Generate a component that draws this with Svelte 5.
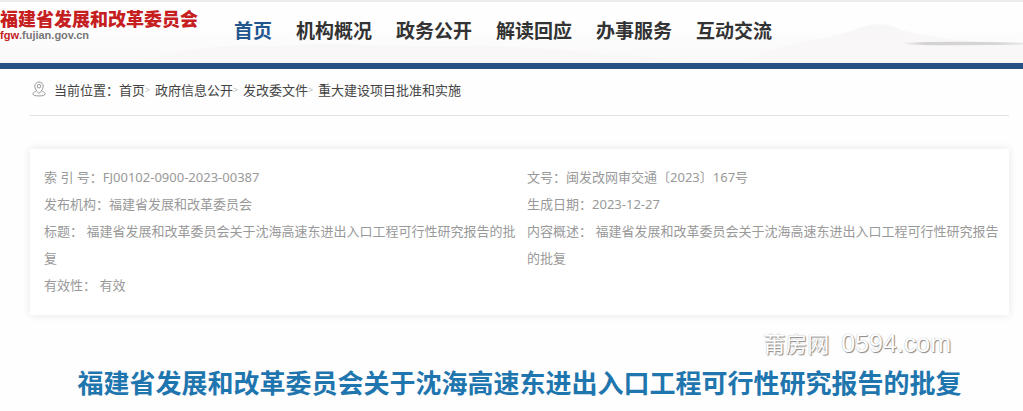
<script lang="ts">
  const title = "福建省发展和改革委员会关于沈海高速东进出入口工程可行性研究报告的批复";

  const nav = ["首页", "机构概况", "政务公开", "解读回应", "办事服务", "互动交流"];

  const crumbs = ["首页", "政府信息公开", "发改委文件", "重大建设项目批准和实施"];

  const columns = [
    [
      { label: "索 引 号：", value: "FJ00102-0900-2023-00387" },
      { label: "发布机构：", value: "福建省发展和改革委员会" },
      { label: "标题： ", value: title },
      { label: "有效性： ", value: "有效" },
    ],
    [
      { label: "文号：", value: "闽发改网审交通〔2023〕167号" },
      { label: "生成日期：", value: "2023-12-27" },
      { label: "内容概述： ", value: title },
    ],
  ];
</script>

<div class="page">
  <header>
    <svg class="hills" viewBox="0 0 1023 60" preserveAspectRatio="none" aria-hidden="true">
      <defs>
        <linearGradient id="fade" x1="0" y1="0" x2="0" y2="1">
          <stop offset="0" stop-color="#f5f3f4" />
          <stop offset="1" stop-color="#faf7f7" />
        </linearGradient>
        <linearGradient id="streak" x1="0" y1="0" x2="1" y2="0">
          <stop offset="0" stop-color="#d2d2d2" stop-opacity="0" />
          <stop offset="0.2" stop-color="#d2d2d2" />
          <stop offset="0.8" stop-color="#d6d6d6" />
          <stop offset="1" stop-color="#d2d2d2" stop-opacity="0.4" />
        </linearGradient>
      </defs>
      <path d="M130 60C180 48 220 40 270 44C340 38 420 46 480 43C540 44 600 52 660 54L700 60Z" fill="url(#fade)" opacity="0.6" />
      <path d="M740 60C790 36 830 38 860 25Q884 18 900 27C930 36 980 40 1023 42V60Z" fill="url(#fade)" opacity="0.7" />
      <path d="M900 40Q960 38 1023 40V42Q960 43 910 42Z" fill="url(#streak)" />
    </svg>
    <a class="logo" href="/">
      <strong>福建省发展和改革委员会</strong>
      <span><b>fgw</b>.fujian.gov.cn</span>
    </a>
    <nav>
      {#each nav as item, i (item)}
        <a href="#nav-{i}" class:active={i === 0}>{item}</a>
      {/each}
    </nav>
  </header>

  <main>
    <div class="crumbs">
      <svg class="pin" viewBox="0 0 14 16" aria-hidden="true">
        <path d="M7 12.5C4.2 9.8 2.8 7.6 2.8 5.2a4.2 4.2 0 0 1 8.4 0C11.2 7.6 9.8 9.8 7 12.5Z" />
        <circle cx="7" cy="5.2" r="1.8" />
        <path d="M3.8 10.4C1.8 11 .8 12 .8 13C.8 15.6 13.2 15.6 13.2 13C13.2 12 12.2 11 10.2 10.4" />
      </svg>
      <span>当前位置：</span>
      {#each crumbs as crumb, i (crumb)}
        {#if i > 0}<i>&gt;</i>{/if}
        <a href="#crumb-{i}">{crumb}</a>
      {/each}
    </div>

    <section class="card">
      {#each columns as column}
        <dl>
          {#each column as row (row.label)}
            <div><dt>{row.label}</dt><dd>{row.value}</dd></div>
          {/each}
        </dl>
      {/each}
    </section>

    <p class="mark">莆房网<span>0594.com</span></p>
    <h1>{title}</h1>
  </main>
</div>

<style>
  :global(body) {
    margin: 0;
    background: #fefefe;
  }

  .page {
    font-family: "Noto Sans", "Noto Sans CJK SC", sans-serif;
    font-size: 13px;
    color: #444;
    overflow: hidden;
  }

  a {
    color: inherit;
    text-decoration: none;
  }

  header {
    position: relative;
    display: flex;
    align-items: flex-start;
    height: 61px;
    border-top: 2px solid #ececec;
    border-bottom: 6px solid #265183;
    background: linear-gradient(#fefefe 40%, #faf8f8);
  }

  .hills {
    position: absolute;
    inset: 0;
    width: 100%;
    height: 100%;
  }

  .logo {
    position: relative;
    display: flex;
    flex-direction: column;
    width: 234px;
    padding-top: 5px;

    & strong {
      font-family: "Noto Sans CJK SC", sans-serif;
      font-size: 18px;
      font-weight: 900;
      line-height: 22px;
      color: #c5201f;
    }

    & span {
      font-family: "Liberation Sans", sans-serif;
      font-size: 11px;
      font-weight: bold;
      line-height: 13px;
      color: #777;
    }

    & b {
      color: #c5201f;
    }
  }

  nav {
    position: relative;
    display: flex;
    gap: 24px;
    padding-top: 14px;
    font-family: "Noto Sans CJK SC", sans-serif;
    font-size: 19px;
    font-weight: bold;
    line-height: 28px;
    color: #333;
    white-space: nowrap;
  }

  .active {
    color: #22568f;
  }

  main {
    padding: 0 14px 0 30px;
  }

  .crumbs {
    display: flex;
    align-items: center;
    height: 40px;
    padding-bottom: 6px;
    border-bottom: 1px solid #e2e2e2;

    & i {
      width: 10px;
      font-size: 9px;
      font-style: normal;
      color: #bbb;
    }
  }

  .pin {
    width: 14px;
    height: 16px;
    margin: 0 8px 0 2px;
    fill: none;
    stroke: #999;
    stroke-width: 1;
  }

  .card {
    display: grid;
    grid-template-columns: 483px 1fr;
    margin-top: 33px;
    padding: 15px 6px 16px 14px;
    background: #fff;
    box-shadow: 0 0 8px rgba(0, 0, 0, 0.1);
    line-height: 27px;
    color: #999;
  }

  dl {
    margin: 0;
  }

  dt,
  dd {
    display: inline;
    margin: 0;
  }

  dt {
    white-space: pre-wrap;
  }

  .mark {
    margin: 14px 58px 0 0;
    font-family: "Noto Sans CJK SC", sans-serif;
    font-size: 22px;
    line-height: 26px;
    text-align: right;
    color: #fff;
    text-shadow: 1px 1px 1px #888, 0 0 1px #aaa;

    & span {
      margin-left: 12px;
      font-family: "Liberation Sans", sans-serif;
      font-size: 25px;
    }
  }

  h1 {
    margin: 7px 0 0;
    font-family: "Noto Sans CJK SC", sans-serif;
    font-size: 26px;
    line-height: 38px;
    text-align: center;
    color: #1f76ae;
  }
</style>
